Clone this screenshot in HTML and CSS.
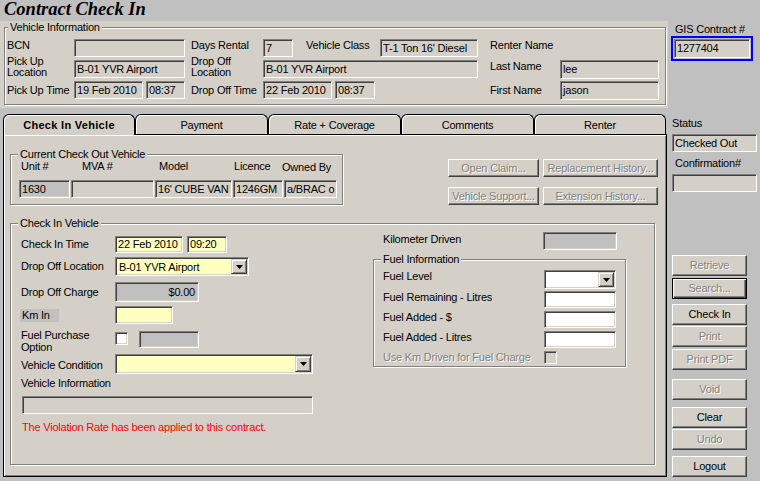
FILE: index.html
```
<!DOCTYPE html>
<html>
<head>
<meta charset="utf-8">
<title>Contract Check In</title>
<link rel="stylesheet" href="styles.css">
</head>
<body>
<div class="app">
  <div class="main">
    <div class="title">Contract Check In</div>
    <div class="vinfo">
      <div class="group vgroup">
        <span class="gtitle">Vehicle Information</span>
        <div class="vgrid">
          <span class="lbl top">BCN</span>
          <div class="fld"></div>
          <span class="lbl top pl6">Days Rental</span>
          <div class="cellrow">
            <div class="fld w30">7</div>
            <span class="lbl vclass">Vehicle Class</span>
            <div class="fld w98 push">T-1 Ton 16' Diesel</div>
          </div>
          <span class="lbl top pl12">Renter Name</span>
          <span></span>

          <span class="lbl two">Pick Up<br>Location</span>
          <div class="fld">B-01 YVR Airport</div>
          <span class="lbl two pl6">Drop Off<br>Location</span>
          <div class="fld">B-01 YVR Airport</div>
          <span class="lbl top pl12">Last Name</span>
          <div class="fld h19">lee</div>

          <span class="lbl mid">Pick Up Time</span>
          <div class="cellrow"><div class="fld w69">19 Feb 2010</div><div class="fld w39 ml3">08:37</div></div>
          <span class="lbl mid pl6">Drop Off Time</span>
          <div class="cellrow"><div class="fld w69">22 Feb 2010</div><div class="fld w40 ml3">08:37</div></div>
          <span class="lbl mid pl12">First Name</span>
          <div class="fld h19">jason</div>
        </div>
      </div>
    </div>

    <div class="tabs">
      <div class="tab active">Check In Vehicle</div>
      <div class="tab">Payment</div>
      <div class="tab">Rate + Coverage</div>
      <div class="tab">Comments</div>
      <div class="tab">Renter</div>
    </div>

    <div class="panel">
      <div class="currow">
        <div class="group cgroup">
          <span class="gtitle">Current Check Out Vehicle</span>
          <div class="cgrid">
            <span class="lbl cl1">Unit #</span>
            <span class="lbl cl2">MVA #</span>
            <span class="lbl cl3">Model</span>
            <span class="lbl cl4">Licence</span>
            <span class="lbl cl5">Owned By</span>
            <div class="fld grey">1630</div>
            <div class="fld"></div>
            <div class="fld">16' CUBE VAN</div>
            <div class="fld">1246GM</div>
            <div class="fld">a/BRAC o</div>
          </div>
        </div>
        <div class="btngrid">
          <div class="btn dis">Open Claim...</div>
          <div class="btn dis">Replacement History...</div>
          <div class="btn dis">Vehicle Support...</div>
          <div class="btn dis">Extension History...</div>
        </div>
      </div>

      <div class="group cigroup">
        <span class="gtitle">Check In Vehicle</span>
        <div class="cileft">
          <div class="cir cir1">
            <span class="l">Check In Time</span>
            <div class="fld yel w68 h17">22 Feb 2010</div>
            <div class="fld yel w40 h17 ml4">09:20</div>
          </div>
          <div class="cir cir2">
            <span class="l">Drop Off Location</span>
            <div class="combo yel w134 h19">
              <span class="txt">B-01 YVR Airport</span>
              <span class="arr"><svg width="7" height="4" viewBox="0 0 7 4"><path d="M0 0h7L3.5 4z"/></svg></span>
            </div>
          </div>
          <div class="cir cir3">
            <span class="l">Drop Off Charge</span>
            <div class="fld grey w84 h20 right">$0.00</div>
          </div>
          <div class="cir cir4">
            <span class="l"><span class="kmlbl">Km In</span></span>
            <div class="fld yel w58 h18"></div>
          </div>
          <div class="cir cir5">
            <span class="l two2">Fuel Purchase<br>Option</span>
            <div class="chk fpchk"></div>
            <div class="fld grey w60 h17 fpin"></div>
          </div>
          <div class="cir cir6">
            <span class="l vclbl">Vehicle Condition</span>
            <div class="combo yel w198 h20">
              <span class="txt"></span>
              <span class="arr"><svg width="7" height="4" viewBox="0 0 7 4"><path d="M0 0h7L3.5 4z"/></svg></span>
            </div>
          </div>
          <div class="vilbl">Vehicle Information</div>
          <div class="fld vibox"></div>
          <div class="viol">The Violation Rate has been applied to this contract.</div>
        </div>

        <div class="ciright">
          <div class="kmrow">
            <span class="l">Kilometer Driven</span>
            <div class="fld grey w74 h18"></div>
          </div>
          <div class="group fgroup">
            <span class="gtitle">Fuel Information</span>
            <div class="fr fr1">
              <span class="l">Fuel Level</span>
              <div class="combo white w72 h19">
                <span class="txt"></span>
                <span class="arr"><svg width="7" height="4" viewBox="0 0 7 4"><path d="M0 0h7L3.5 4z"/></svg></span>
              </div>
            </div>
            <div class="fr fr2">
              <span class="l">Fuel Remaining - Litres</span>
              <div class="fld white w72 h17"></div>
            </div>
            <div class="fr fr3">
              <span class="l">Fuel Added - $</span>
              <div class="fld white w72 h17"></div>
            </div>
            <div class="fr fr4">
              <span class="l">Fuel Added - Litres</span>
              <div class="fld white w72 h17"></div>
            </div>
            <div class="fr fr5">
              <span class="l dis">Use Km Driven for Fuel Charge</span>
              <div class="chk off"></div>
            </div>
          </div>
        </div>
      </div>
    </div>
  </div>

  <div class="side">
    <span class="slbl gis">GIS Contract #</span>
    <div class="gisbox"><div class="fld gisfld">1277404</div></div>
    <span class="slbl stl">Status</span>
    <div class="fld sf">Checked Out</div>
    <span class="slbl cfl">Confirmation#</span>
    <div class="fld sf"></div>
    <div class="btn sbtn dis b-ret">Retrieve</div>
    <div class="btn sbtn dis def b-sea">Search...</div>
    <div class="btn sbtn b-chk">Check In</div>
    <div class="btn sbtn dis b-prn">Print</div>
    <div class="btn sbtn dis b-pdf">Print PDF</div>
    <div class="btn sbtn dis b-void">Void</div>
    <div class="btn sbtn b-clr">Clear</div>
    <div class="btn sbtn dis b-undo">Undo</div>
    <div class="btn sbtn b-out">Logout</div>
  </div>
</div>
</body>
</html>
```
FILE: styles.css
```
* { box-sizing: border-box; }
html, body { margin: 0; }
body {
  width: 760px;
  height: 481px;
  overflow: hidden;
  background: #c0c0c0;
  font-family: "Liberation Sans", Arial, sans-serif;
  font-size: 11px;
  letter-spacing: -0.2px;
  color: #000;
}
.app { display: flex; align-items: flex-start; }
.main { width: 668px; flex: none; }
.title {
  height: 21px;
  padding-left: 4px;
  font: italic bold 18.5px/18px "Liberation Serif", "Times New Roman", serif;
  letter-spacing: 0;
}
.vinfo { height: 87px; background: #d4d0c8; padding: 6px 0 0 4px; }

.group {
  position: relative;
  border: 1px solid #808080;
  box-shadow: inset 1px 1px 0 #fff, 1px 1px 0 #fff;
}
.gtitle {
  position: absolute;
  top: -7px;
  left: 7px;
  padding: 0 2px;
  background: #d4d0c8;
  line-height: 13px;
  white-space: nowrap;
}
.vgroup { width: 662px; height: 78px; padding: 11px 0 0 2px; }
.vgroup .gtitle { left: 3px; }
.vgrid {
  display: grid;
  grid-template-columns: 67px 111px 78px 215px 82px 99px;
  grid-template-rows: 18px 18px 18px;
  row-gap: 3px;
}
.lbl { line-height: 13px; white-space: nowrap; }
.top { align-self: start; }
.mid { align-self: center; padding-top: 1px; }
.two { align-self: end; line-height: 11px; margin-bottom: 0; }
.pl6 { padding-left: 6px; }
.pl12 { padding-left: 12px; }
.cellrow { display: flex; align-items: flex-start; }
.vclass { margin-left: 13px; }
.push { margin-left: auto; }

.fld {
  height: 18px;
  border: 1px solid;
  border-color: #808080 #fff #fff #808080;
  box-shadow: inset 1px 1px 0 #404040, inset -1px -1px 0 #d4d0c8;
  background: #d4d0c8;
  padding: 0 0 0 2px;
  line-height: 16px;
  white-space: nowrap;
  overflow: hidden;
  flex: none;
}
.grey { background: #c0c0c0; }
.yel { background: #ffffc0; }
.white { background: #fff; }
.right { text-align: right; padding-right: 3px; }
.w30 { width: 30px; }
.w39 { width: 39px; }
.w40 { width: 40px; }
.w58 { width: 58px; }
.w60 { width: 60px; }
.w68 { width: 68px; }
.w69 { width: 69px; }
.w72 { width: 72px; }
.w74 { width: 74px; }
.w84 { width: 84px; }
.w98 { width: 98px; }
.w134 { width: 134px; }
.w198 { width: 198px; }
.h17 { height: 17px; line-height: 15px; }
.h18 { height: 18px; }
.h19 { height: 19px; line-height: 17px; }
.h20 { height: 20px; line-height: 18px; }
.ml3 { margin-left: 3px; }
.ml4 { margin-left: 4px; }

/* tabs */
.tabs {
  display: grid;
  grid-template-columns: 132px 133px 133px 133px 132px;
  margin: 6px 0 0 3px;
  height: 20px;
  align-items: start;
}
.tab {
  height: 20px;
  border: 1px solid #000;
  border-bottom: 0;
  border-radius: 6px 6px 0 0;
  background: #d4d0c8;
  box-shadow: inset 1px 1px 0 #fff;
  text-align: center;
  line-height: 20px;
  white-space: nowrap;
}
.tab.active {
  height: 21px;
  position: relative;
  z-index: 1;
  font-weight: bold;
  letter-spacing: 0.3px;
}
.panel {
  width: 664px;
  height: 343px;
  margin-left: 3px;
  border: 1px solid #000;
  background: #d4d0c8;
  box-shadow: inset 1px 1px 0 #fff, inset -1px -1px 0 #808080;
  padding: 19px 8px 0 6px;
}

.currow { display: flex; justify-content: space-between; align-items: flex-start; }
.cgroup { width: 333px; height: 51px; padding: 5px 0 0 8px; }
.cgrid {
  display: grid;
  grid-template-columns: 51px 83px 77px 50px 53px;
  grid-template-rows: 13px 18px;
  column-gap: 1px;
  row-gap: 7px;
}
.cl1 { padding-left: 2px; }
.cl2 { padding-left: 11px; }
.cl3 { padding-left: 4px; }
.cl4 { padding-left: 1px; }
.cl5 { margin-left: -2px; padding-top: 1px; }

.btngrid {
  display: grid;
  grid-template-columns: 91px 115px;
  grid-template-rows: 18px 18px;
  column-gap: 4px;
  row-gap: 10px;
  margin-top: 5px;
}
.btn {
  border: 1px solid;
  border-color: #fff #404040 #404040 #fff;
  box-shadow: inset -1px -1px 0 #808080;
  background: #d4d0c8;
  text-align: center;
  line-height: 16px;
  white-space: nowrap;
  overflow: hidden;
}
.dis { color: #808080; text-shadow: 1px 1px 0 #fff; }

.cigroup {
  width: 645px;
  height: 242px;
  margin-top: 18px;
  display: flex;
  align-items: flex-start;
}
.cileft { width: 362px; flex: none; padding-left: 10px; }
.cir { display: flex; align-items: center; }
.cir .l { width: 94px; flex: none; line-height: 13px; white-space: nowrap; }
.cir1 { height: 17px; margin-top: 12px; }
.cir2 { height: 19px; margin-top: 4px; }
.cir3 { height: 20px; margin-top: 6px; }
.cir4 { height: 18px; margin-top: 4px; }
.cir5 { height: 20px; margin-top: 6px; align-items: flex-start; }
.cir6 { height: 20px; margin-top: 4px; }
.cir .two2 { line-height: 12px; margin-top: -1px; }
.cir .vclbl { padding-top: 3px; }
.kmlbl {
  display: inline-block;
  width: 39px;
  height: 13px;
  margin-left: -1px;
  padding-left: 2px;
  background: #c0c0c0;
}
.fpchk { margin-top: 2px; }
.fpin { margin: 1px 0 0 11px; }
.vilbl { margin-top: 3px; line-height: 13px; }
.vibox { margin: 6px 0 0 1px; width: 291px; height: 18px; }
.viol { margin: 7px 0 0 1px; color: #f00; line-height: 13px; white-space: nowrap; }

.combo {
  display: flex;
  align-items: stretch;
  border: 1px solid;
  border-color: #808080 #fff #fff #808080;
  box-shadow: inset 1px 1px 0 #404040, inset -1px -1px 0 #d4d0c8;
  padding: 1px;
  flex: none;
}
.combo .txt { flex: 1; padding-left: 2px; line-height: 16px; white-space: nowrap; overflow: hidden; }
.combo .arr {
  width: 16px;
  flex: none;
  border: 1px solid;
  border-color: #d4d0c8 #404040 #404040 #d4d0c8;
  box-shadow: inset 1px 1px 0 #fff, inset -1px -1px 0 #808080;
  background: #d4d0c8;
  display: flex;
  align-items: center;
  justify-content: center;
}
.combo .arr svg { display: block; fill: #000; }

.chk {
  width: 13px;
  height: 13px;
  flex: none;
  border: 1px solid;
  border-color: #808080 #fff #fff #808080;
  box-shadow: inset 1px 1px 0 #404040, inset -1px -1px 0 #d4d0c8;
  background: #fff;
}
.chk.off { background: #d4d0c8; }

.ciright { padding-top: 8px; }
.kmrow { display: flex; height: 18px; padding-left: 10px; }
.kmrow .l { width: 160px; line-height: 13px; padding-top: 1px; white-space: nowrap; }
.fgroup { width: 253px; height: 108px; margin-top: 9px; padding: 10px 0 0 9px; }
.fr { display: flex; align-items: flex-start; }
.fr .l { width: 161px; flex: none; line-height: 13px; white-space: nowrap; }
.fr1 { height: 19px; }
.fr2 { height: 17px; margin-top: 2px; }
.fr3 { height: 17px; margin-top: 3px; }
.fr4 { height: 17px; margin-top: 3px; }
.fr5 { height: 13px; margin-top: 3px; }

/* side column */
.side { flex: 1; display: flex; flex-direction: column; align-items: flex-start; }
.slbl { line-height: 13px; white-space: nowrap; }
.gis { margin-top: 23px; padding-left: 7px; }
.gisbox { margin-left: 3px; border: 2px solid #0000ff; padding: 1px; }
.gisfld { width: 76px; height: 19px; line-height: 17px; }
.stl { margin-top: 56px; padding-left: 4px; }
.sf { margin: 4px 0 0 4px; width: 85px; height: 18px; }
.cfl { margin-top: 5px; padding-left: 7px; }
.sbtn { margin-left: 4px; width: 75px; height: 21px; line-height: 19px; }
.def {
  border-color: #000;
  box-shadow: inset 1px 1px 0 #fff, inset -1px -1px 0 #404040, inset -2px -2px 0 #808080;
}
.b-ret { margin-top: 63px; }
.b-sea { margin-top: 2px; }
.b-chk { margin-top: 5px; }
.b-prn { margin-top: 1px; }
.b-pdf { margin-top: 2px; }
.b-void { margin-top: 9px; }
.b-clr { margin-top: 7px; }
.b-undo { margin-top: 1px; }
.b-out { margin-top: 6px; }
```
